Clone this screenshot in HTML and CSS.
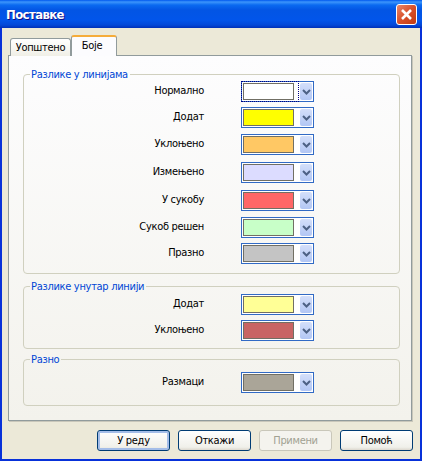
FILE: index.html
```html
<!DOCTYPE html>
<html lang="sr">
<head>
    <meta charset="UTF-8">
    <title>Поставке</title>
    <link rel="stylesheet" href="styles.css">
</head>
<body>
    <div class="window">
        <div class="titlebar">
            <span class="title">Поставке</span>
            <span class="close">
                <svg width="13" height="13" viewBox="0 0 13 13"><path d="M2 2 L11 11 M11 2 L2 11" stroke="#fff" stroke-width="2.6" fill="none"/></svg>
            </span>
        </div>
        <div class="client">
            <div class="tabs">
                <div class="tab">Уопштено</div>
                <div class="tab tab-active">Боје</div>
            </div>
            <div class="pane">
                <fieldset class="group group-lines">
                    <legend>Разлике у линијама</legend>
                    <div class="row">
                        <label>Нормално</label>
                        <div class="combo combo-focus"><span class="swatch c-white"></span><span class="arrow"><svg width="9" height="6" viewBox="0 0 9 6"><path d="M1 1 L4.5 4.5 L8 1" stroke="#4d6185" stroke-width="2" fill="none"/></svg></span></div>
                    </div>
                    <div class="row">
                        <label>Додат</label>
                        <div class="combo"><span class="swatch c-yellow"></span><span class="arrow"><svg width="9" height="6" viewBox="0 0 9 6"><path d="M1 1 L4.5 4.5 L8 1" stroke="#4d6185" stroke-width="2" fill="none"/></svg></span></div>
                    </div>
                    <div class="row row-6">
                        <label>Уклоњено</label>
                        <div class="combo"><span class="swatch c-orange"></span><span class="arrow"><svg width="9" height="6" viewBox="0 0 9 6"><path d="M1 1 L4.5 4.5 L8 1" stroke="#4d6185" stroke-width="2" fill="none"/></svg></span></div>
                    </div>
                    <div class="row row-7">
                        <label>Измењено</label>
                        <div class="combo"><span class="swatch c-lilac"></span><span class="arrow"><svg width="9" height="6" viewBox="0 0 9 6"><path d="M1 1 L4.5 4.5 L8 1" stroke="#4d6185" stroke-width="2" fill="none"/></svg></span></div>
                    </div>
                    <div class="row row-7">
                        <label>У сукобу</label>
                        <div class="combo"><span class="swatch c-red"></span><span class="arrow"><svg width="9" height="6" viewBox="0 0 9 6"><path d="M1 1 L4.5 4.5 L8 1" stroke="#4d6185" stroke-width="2" fill="none"/></svg></span></div>
                    </div>
                    <div class="row row-6">
                        <label>Сукоб решен</label>
                        <div class="combo"><span class="swatch c-green"></span><span class="arrow"><svg width="9" height="6" viewBox="0 0 9 6"><path d="M1 1 L4.5 4.5 L8 1" stroke="#4d6185" stroke-width="2" fill="none"/></svg></span></div>
                    </div>
                    <div class="row">
                        <label>Празно</label>
                        <div class="combo"><span class="swatch c-gray"></span><span class="arrow"><svg width="9" height="6" viewBox="0 0 9 6"><path d="M1 1 L4.5 4.5 L8 1" stroke="#4d6185" stroke-width="2" fill="none"/></svg></span></div>
                    </div>
                </fieldset>
                <fieldset class="group group-inline">
                    <legend>Разлике унутар линији</legend>
                    <div class="row">
                        <label>Додат</label>
                        <div class="combo"><span class="swatch c-paleyellow"></span><span class="arrow"><svg width="9" height="6" viewBox="0 0 9 6"><path d="M1 1 L4.5 4.5 L8 1" stroke="#4d6185" stroke-width="2" fill="none"/></svg></span></div>
                    </div>
                    <div class="row">
                        <label>Уклоњено</label>
                        <div class="combo"><span class="swatch c-darkred"></span><span class="arrow"><svg width="9" height="6" viewBox="0 0 9 6"><path d="M1 1 L4.5 4.5 L8 1" stroke="#4d6185" stroke-width="2" fill="none"/></svg></span></div>
                    </div>
                </fieldset>
                <fieldset class="group group-misc">
                    <legend>Разно</legend>
                    <div class="row">
                        <label>Размаци</label>
                        <div class="combo"><span class="swatch c-taupe"></span><span class="arrow"><svg width="9" height="6" viewBox="0 0 9 6"><path d="M1 1 L4.5 4.5 L8 1" stroke="#4d6185" stroke-width="2" fill="none"/></svg></span></div>
                    </div>
                </fieldset>
            </div>
            <div class="buttons">
                <button class="btn btn-default">У реду</button>
                <button class="btn">Откажи</button>
                <button class="btn" disabled>Примени</button>
                <button class="btn">Помоћ</button>
            </div>
        </div>
    </div>
</body>
</html>
```

FILE: styles.css
```css
* { box-sizing: border-box; }
body { margin: 0; font-family: "DejaVu Sans Condensed", "DejaVu Sans", sans-serif; font-size: 11px; letter-spacing: -0.3px; color: #000; }

.window { width: 422px; height: 461px; display: flex; flex-direction: column; background: #0831d9; padding: 0 2px 2px; }

.titlebar { height: 28px; margin: 0 -2px; padding: 0 5px 0 6px; display: flex; align-items: center; justify-content: space-between; background: linear-gradient(to bottom, #0058ee 0, #3c95fb 2px, #0a6af0 5px, #0355e4 10px, #0255ea 20px, #0348d8 25px, #0030b8 28px); }
.title { font-weight: bold; font-size: 13px; letter-spacing: -0.6px; color: #fff; text-shadow: 1px 1px 0 #0f1089; }
.close { width: 21px; height: 21px; display: flex; align-items: center; justify-content: center; border: 1px solid #fff; border-radius: 3px; background: linear-gradient(135deg, #e9876a 0, #d8502a 50%, #c03a10 100%); }

.client { flex: 1; display: flex; flex-direction: column; background: #ece9d8; padding: 7px 0 8px 6px; }

.tabs { display: flex; align-items: flex-end; height: 21px; padding-left: 2px; margin-bottom: -1px; position: relative; z-index: 1; }
.tab { height: 18px; width: 61px; line-height: 17px; text-align: center; background: linear-gradient(to bottom, #fff, #f0efe6); border: 1px solid #919b9c; border-bottom: none; border-radius: 3px 3px 0 0; }
.tab-active { width: 46px; height: 21px; line-height: 18px; padding-right: 4px; background: #fcfcfe; border-top: 2px solid #f5ac3a; }

.pane { width: 404px; height: 366px; padding: 12px 11px 0 14px; border: 1px solid #919b9c; box-shadow: 1px 1px 0 #c9c7ba; background: linear-gradient(to bottom, #fdfdfe, #f3f2ec); }

.group { margin: 0; border: 1px solid #d0d0bf; border-radius: 4px; padding: 0; }
.group legend { margin-left: 6px; padding: 0 2px 0 1px; height: 13px; line-height: 13px; color: #0046d5; }
.group-lines { padding-bottom: 9px; }
.group-inline { margin-top: 6px; padding: 1px 0 7px; }
.group-misc { margin-top: 4px; padding: 6px 0 12px; }

.row { display: flex; align-items: center; height: 21px; margin-top: 5px; }
.row:first-of-type { margin-top: 0; }
.row-6 { margin-top: 6px; }
.row-7 { margin-top: 7px; }
.row label { width: 180px; padding-bottom: 2px; text-align: right; }

.combo { position: relative; width: 73px; height: 21px; margin-left: 37px; padding: 1px; display: flex; align-items: center; border: 1px solid #316ac5; background: #fff; }
.combo-focus::after { content: ""; position: absolute; left: -1px; top: -1px; bottom: -1px; width: 56px; border: 1px dotted #000080; }
.swatch { width: 52px; height: 17px; border: 1px solid #716f64; }
.arrow { width: 12px; height: 17px; margin-left: 6px; display: flex; align-items: center; justify-content: center; border-radius: 2px; background: linear-gradient(to bottom, #d4dffa, #b2c6f4); }

.c-white { background: #fff; }
.c-yellow { background: #ff0; }
.c-orange { background: #ffc864; }
.c-lilac { background: #dcdcff; }
.c-red { background: #f66; }
.c-green { background: #c8ffc8; }
.c-gray { background: #c4c4c4; }
.c-paleyellow { background: #ffff96; }
.c-darkred { background: #c86464; }
.c-taupe { background: #aaa598; }

.buttons { display: flex; justify-content: flex-end; gap: 8px; margin-top: 9px; padding-right: 7px; }
.btn { width: 73px; height: 21px; padding: 0; font: inherit; letter-spacing: inherit; color: #000; border: 1px solid #003c74; border-radius: 3px; background: linear-gradient(to bottom, #fff, #f0f0ea 85%, #dcd8ce); }
.btn-default { box-shadow: inset 0 0 0 2px #a4bde8; }
.btn:disabled { color: #a1a192; border-color: #c9c7ba; background: #f4f3ee; }
```
